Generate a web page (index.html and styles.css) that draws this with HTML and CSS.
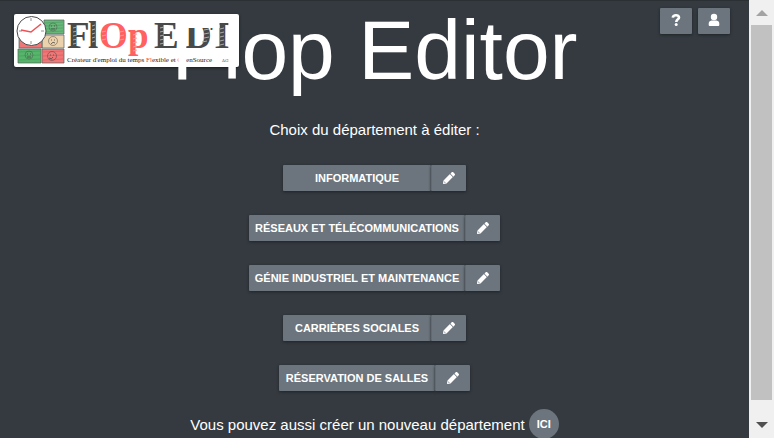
FILE: index.html
```html
<!DOCTYPE html>
<html lang="fr">
<head>
<meta charset="utf-8">
<title>Flop Editor</title>
<link rel="stylesheet" href="styles.css">
</head>
<body>
<svg class="defs" aria-hidden="true">
  <symbol id="pencil" viewBox="0 0 512 512"><path fill="currentColor" d="M498 142l-46 46c-5 5-12 5-17 0L324 77c-5-5-5-12 0-17l46-46c19-19 49-19 68 0l60 60c19 19 19 49 0 68zM284 100L22 362 0 484c-3 16 12 30 28 28l122-22 262-262c5-5 5-12 0-17L301 100c-4-5-12-5-17 0zM84 424h24v20l-42 12-12-11 12-41h18v20z"/></symbol>
</svg>
<div class="page">
  <div class="content">
    <a class="logo" href="#" aria-label="FlOpEDT">
      <svg viewBox="0 0 225 53">
        <g stroke="#55605a" stroke-width=".7">
          <path fill="#69b77a" d="M30 6h20v14H30z"/>
          <path fill="#ecd2ac" d="M28 21h22v13H28z"/>
          <path fill="#ef7777" d="M5 20h23v14H5zM28 35h22v14H28z"/>
          <path fill="#56b46b" d="M4 35h23v14H4z"/>
        </g>
        <g fill="none" stroke="#389653" stroke-width=".5"><path d="M31 9l18-1M31 12l18-1M31 15l18-1M31 18l18-1M5 38l21-1M5 42l21-1M5 46l21-1"/></g>
        <g fill="none" stroke="#db4d50" stroke-width=".5"><path d="M29 38l20-1M29 42l20-1M29 46l20-1"/></g>
        <g fill="none" stroke="#494744" stroke-width=".8">
          <circle cx="39" cy="13" r="4" stroke-width=".4"/><circle cx="39" cy="27" r="4.500" stroke-width=".5"/><circle cx="38" cy="42" r="4.500" stroke-width=".5"/><circle cx="15" cy="41" r="4" stroke-width=".4"/>
          <path d="M37 12h1m2 0h1m-4 3h4M37 26h1m2 0h1m-4 4q2-3 4-1M36 41h1m2 0h1m-5 3q3 2 4-1M13 40h1m2 0h1m-4 3h4"/>
        </g>
        <circle cx="17.500" cy="17" r="14.500" fill="#fff" stroke="#4b4b4b"/>
        <path d="M17 4v3m0 20v3M5 17h3m19 0h3" stroke="#777" stroke-width=".8"/>
        <path d="M7 16l10 2 10-8" fill="none" stroke="#ef5055" stroke-width="1.500"/>
        <g class="wordmark">
          <text x="53" y="34">F</text>
          <text x="74" y="34">l</text>
          <text x="85" y="34" class="red">O</text>
          <text x="114" y="34" class="red">p</text>
          <text x="140" y="34">E</text>
          <text x="171" y="34">D</text>
          <text x="196" y="34">T</text>
        </g>
        <path class="hatch" d="M59 14l4-1M59 18l4-1M59 22l4-1M59 26l4-1M59 30l4-1M78 12l3-1M78 16l3-1M78 20l3-1M78 24l3-1M78 28l3-1M146 14l4-1M146 18l4-1M146 22l4-1M146 26l4-1M146 30l4-1M206 15l4-1M206 19l4-1M206 23l4-1M206 27l4-1M206 31l4-1M190 16l5-1M190 20l5-1M190 24l5-1M188 28l5-1"/>
        <path class="hatch pale" d="M88 18l4-1M88 22l4-1M88 26l4-1M106 18l4-1M106 22l4-1M106 26l4-1M119 21l4-1M119 25l4-1M119 29l4-1M119 33l4-1M119 37l4-1"/>
        <text class="tagline" x="53" y="48">Créateur d'emploi du temps <tspan class="red">Fl</tspan>exible et <tspan class="red">Op</tspan>enSource</text>
        <text class="license" x="208" y="48">AGPL</text>
      </svg>
    </a>
    <nav class="tools">
      <button class="btn tool" aria-label="Aide"><svg viewBox="0 0 12 14"><path d="M2.800 4.700C3 3 4.300 2.300 6 2.300s3 .8 3 2.200C9 6.300 6.300 6.200 6.300 9" fill="none" stroke="currentColor" stroke-width="2.600"/><circle cx="6.200" cy="11.400" r="1.500" fill="currentColor"/></svg></button>
      <button class="btn tool" aria-label="Compte"><svg viewBox="0 0 12 14"><circle cx="6" cy="4" r="3.200" fill="currentColor"/><path fill="currentColor" d="M3.500 7.500h5q2.800.5 2.800 3.300V12q0 1-1 1H1.700q-1 0-1-1v-1.200Q.7 8 3.500 7.500z"/></svg></button>
    </nav>
    <h1>Flop Editor</h1>
    <main>
      <p class="lead">Choix du département à éditer :</p>
      <div class="group"><button class="btn dept">INFORMATIQUE</button><button class="btn edit" aria-label="Modifier Informatique"><svg><use href="#pencil"/></svg></button></div>
      <div class="group wide"><button class="btn dept">RÉSEAUX ET TÉLÉCOMMUNICATIONS</button><button class="btn edit" aria-label="Modifier Réseaux et télécommunications"><svg><use href="#pencil"/></svg></button></div>
      <div class="group wide"><button class="btn dept">GÉNIE INDUSTRIEL ET MAINTENANCE</button><button class="btn edit" aria-label="Modifier Génie industriel et maintenance"><svg><use href="#pencil"/></svg></button></div>
      <div class="group"><button class="btn dept">CARRIÈRES SOCIALES</button><button class="btn edit" aria-label="Modifier Carrières sociales"><svg><use href="#pencil"/></svg></button></div>
      <div class="group medium"><button class="btn dept">RÉSERVATION DE SALLES</button><button class="btn edit" aria-label="Modifier Réservation de salles"><svg><use href="#pencil"/></svg></button></div>
      <p class="create">Vous pouvez aussi créer un nouveau département <button class="round">ICI</button></p>
    </main>
  </div>
  <div class="scrollbar" aria-hidden="true"><i class="up"></i><i class="thumb"></i><i class="down"></i></div>
</div>
</body>
</html>
```

FILE: styles.css
```css
* { box-sizing: border-box; }
body {
  margin: 0;
  background: #343a40;
  color: #fff;
  font-family: "Liberation Sans", Arial, sans-serif;
  font-size: 15px;
  overflow: hidden;
}
button { font-family: inherit; color: #fff; border: 0; padding: 0; cursor: pointer; }
.defs { display: none; }
.page { display: flex; height: 100vh; }
.content {
  position: relative;
  flex: 1;
  overflow: hidden;
  border-top: 1px solid #2b3034;
}
.logo {
  position: absolute;
  left: 14px;
  top: 13px;
  width: 225px;
  height: 53px;
  overflow: hidden;
  background: #fff;
  border-radius: 2px;
  box-shadow: 0 1px 3px #1a1d20;
}
.logo svg { display: block; width: 100%; height: 100%; }
.wordmark { font-family: "Liberation Serif", serif; font-size: 37px; font-weight: bold; fill: #484a4a; }
.wordmark .red { fill: #ff6060; }
.tagline { font-family: "Liberation Serif", serif; font-size: 7px; fill: #222; }
.tagline .red { fill: #f33; }
.license { font-family: "DejaVu Serif", serif; font-size: 4px; fill: #555; }
.hatch { stroke: #aaa; stroke-width: 1; }
.hatch.pale { stroke: #ff9a9a; }
.tools { position: absolute; right: 19px; top: 7px; display: flex; gap: 6px; }
.btn {
  display: flex;
  align-items: center;
  justify-content: center;
  height: 26px;
  background: #6c757d;
  border-radius: 1px;
  box-shadow: 0 1px 3px #202428;
}
.tool { width: 32px; padding-bottom: 2px; }
.tool svg { width: 12px; height: 14px; }
h1 {
  position: relative;
  margin: 0;
  font-size: 84px;
  line-height: 98px;
  font-weight: normal;
  text-align: center;
  white-space: nowrap;
  pointer-events: none;
}
main { display: flex; flex-direction: column; align-items: center; gap: 24px; }
p { margin: 0; }
.lead { margin-top: 20px; line-height: 22px; }
.group { display: flex; min-width: 183px; }
.group.wide { min-width: 251px; }
.group.medium { min-width: 191px; }
.dept { flex: 1; padding: 0 2px; font-size: 11px; font-weight: bold; white-space: nowrap; }
.edit { width: 35px; border-left: 1px solid #636b72; }
.edit svg { width: 12px; height: 12px; }
.create { display: flex; align-items: center; gap: 4px; margin-top: -6px; white-space: nowrap; }
.round { width: 30px; height: 30px; border-radius: 50%; background: #6c757d; font-size: 11px; font-weight: bold; }
.scrollbar {
  display: flex;
  flex-direction: column;
  align-items: center;
  width: 25px;
  padding: 10px 2px;
  background: #f0f0f0;
}
.thumb { width: 21px; flex: 1; margin: 9px 0 22px; background: #c1c1c1; }
.up, .down { border: 6px solid transparent; }
.up { border-top: 0; border-bottom-color: #a3a3a3; }
.down { border-bottom: 0; border-top-color: #505050; }
```
